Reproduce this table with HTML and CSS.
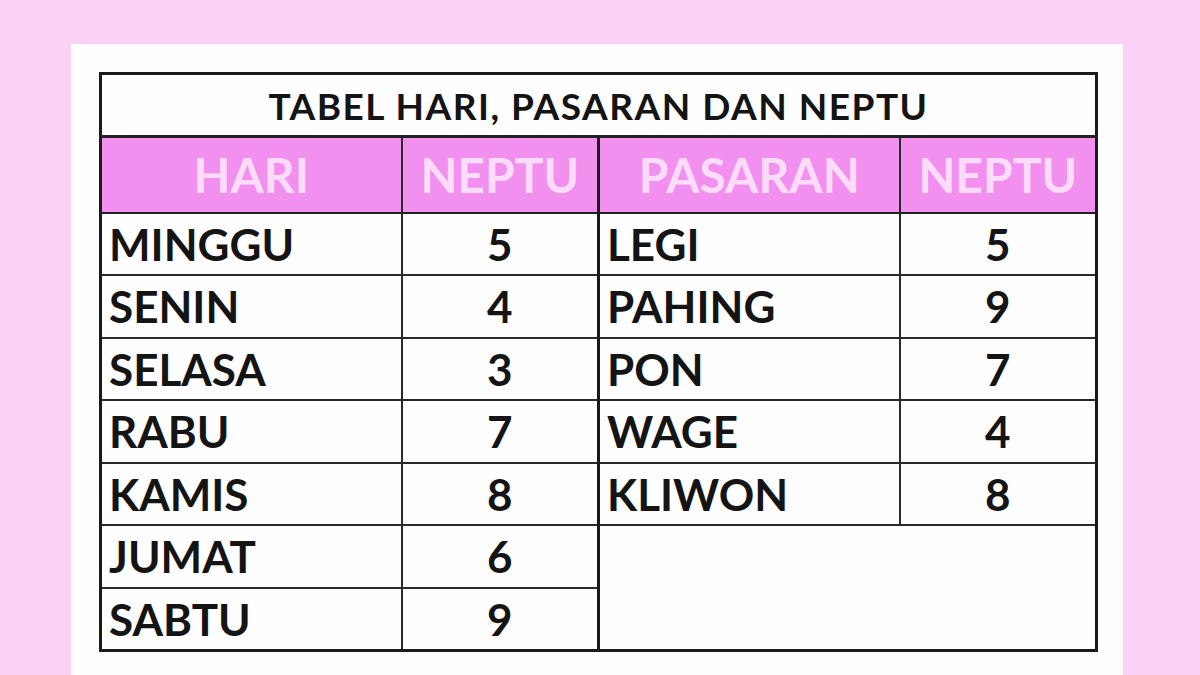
FILE: index.html
```html
<!DOCTYPE html>
<html lang="id">
<head>
<meta charset="utf-8">
<title>Tabel Hari, Pasaran dan Neptu</title>
<link rel="stylesheet" href="styles.css">
</head>
<body>
<div class="card">
  <table class="neptu">
    <colgroup>
      <col class="c-name">
      <col class="c-num">
      <col class="c-name">
      <col class="c-num">
    </colgroup>
    <tr class="title-row"><td colspan="4" class="title">TABEL HARI, PASARAN DAN NEPTU</td></tr>
    <tr class="head-row">
      <th>HARI</th><th>NEPTU</th><th class="split">PASARAN</th><th>NEPTU</th>
    </tr>
    <tr class="data-row"><td class="name">MINGGU</td><td class="num">5</td><td class="name split">LEGI</td><td class="num">5</td></tr>
    <tr class="data-row"><td class="name">SENIN</td><td class="num">4</td><td class="name split">PAHING</td><td class="num">9</td></tr>
    <tr class="data-row"><td class="name">SELASA</td><td class="num">3</td><td class="name split">PON</td><td class="num">7</td></tr>
    <tr class="data-row"><td class="name">RABU</td><td class="num">7</td><td class="name split">WAGE</td><td class="num">4</td></tr>
    <tr class="data-row"><td class="name">KAMIS</td><td class="num">8</td><td class="name split">KLIWON</td><td class="num">8</td></tr>
    <tr class="data-row"><td class="name">JUMAT</td><td class="num">6</td><td class="empty split" colspan="2" rowspan="2"></td></tr>
    <tr class="data-row"><td class="name">SABTU</td><td class="num">9</td></tr>
  </table>
</div>
</body>
</html>
```

FILE: styles.css
```css
html, body {
  margin: 0;
  padding: 0;
}
body {
  background: #f8d1f5;
  height: 675px;
  overflow: hidden;
  font-family: Lato, "Open Sans", sans-serif;
}
.card {
  margin: 44px 0 0 71px;
  width: 1052px;
  height: 640px;
  background: #fefefe;
  padding: 28px 0 0 28px;
  box-sizing: border-box;
}
.neptu {
  width: 997px;
  table-layout: fixed;
  border-collapse: collapse;
  border: 3px solid #1a1a1a;
}
.c-name { width: 301px; }
.c-num { width: 197px; }
.neptu td, .neptu th {
  border: 2px solid #2a2a2a;
  padding: 0;
  color: #141414;
  font-weight: 700;
}
.title-row { height: 63px; }
.title {
  text-align: center;
  font-size: 37px;
  letter-spacing: 1.5px;
  padding-top: 2px;
}
.head-row { height: 76px; }
.head-row th {
  background: #f290ef;
  color: #fcdcf9;
  font-size: 48px;
  text-align: center;
  border-top: 3px solid #222;
  border-bottom: 2px solid #222;
}
.data-row { height: 62.5px; }
.name {
  font-size: 44px;
  text-align: left;
  padding-left: 7px !important;
}
.num {
  font-size: 44px;
  text-align: center;
}
.split {
  border-left: 3px solid #1a1a1a !important;
}
```
